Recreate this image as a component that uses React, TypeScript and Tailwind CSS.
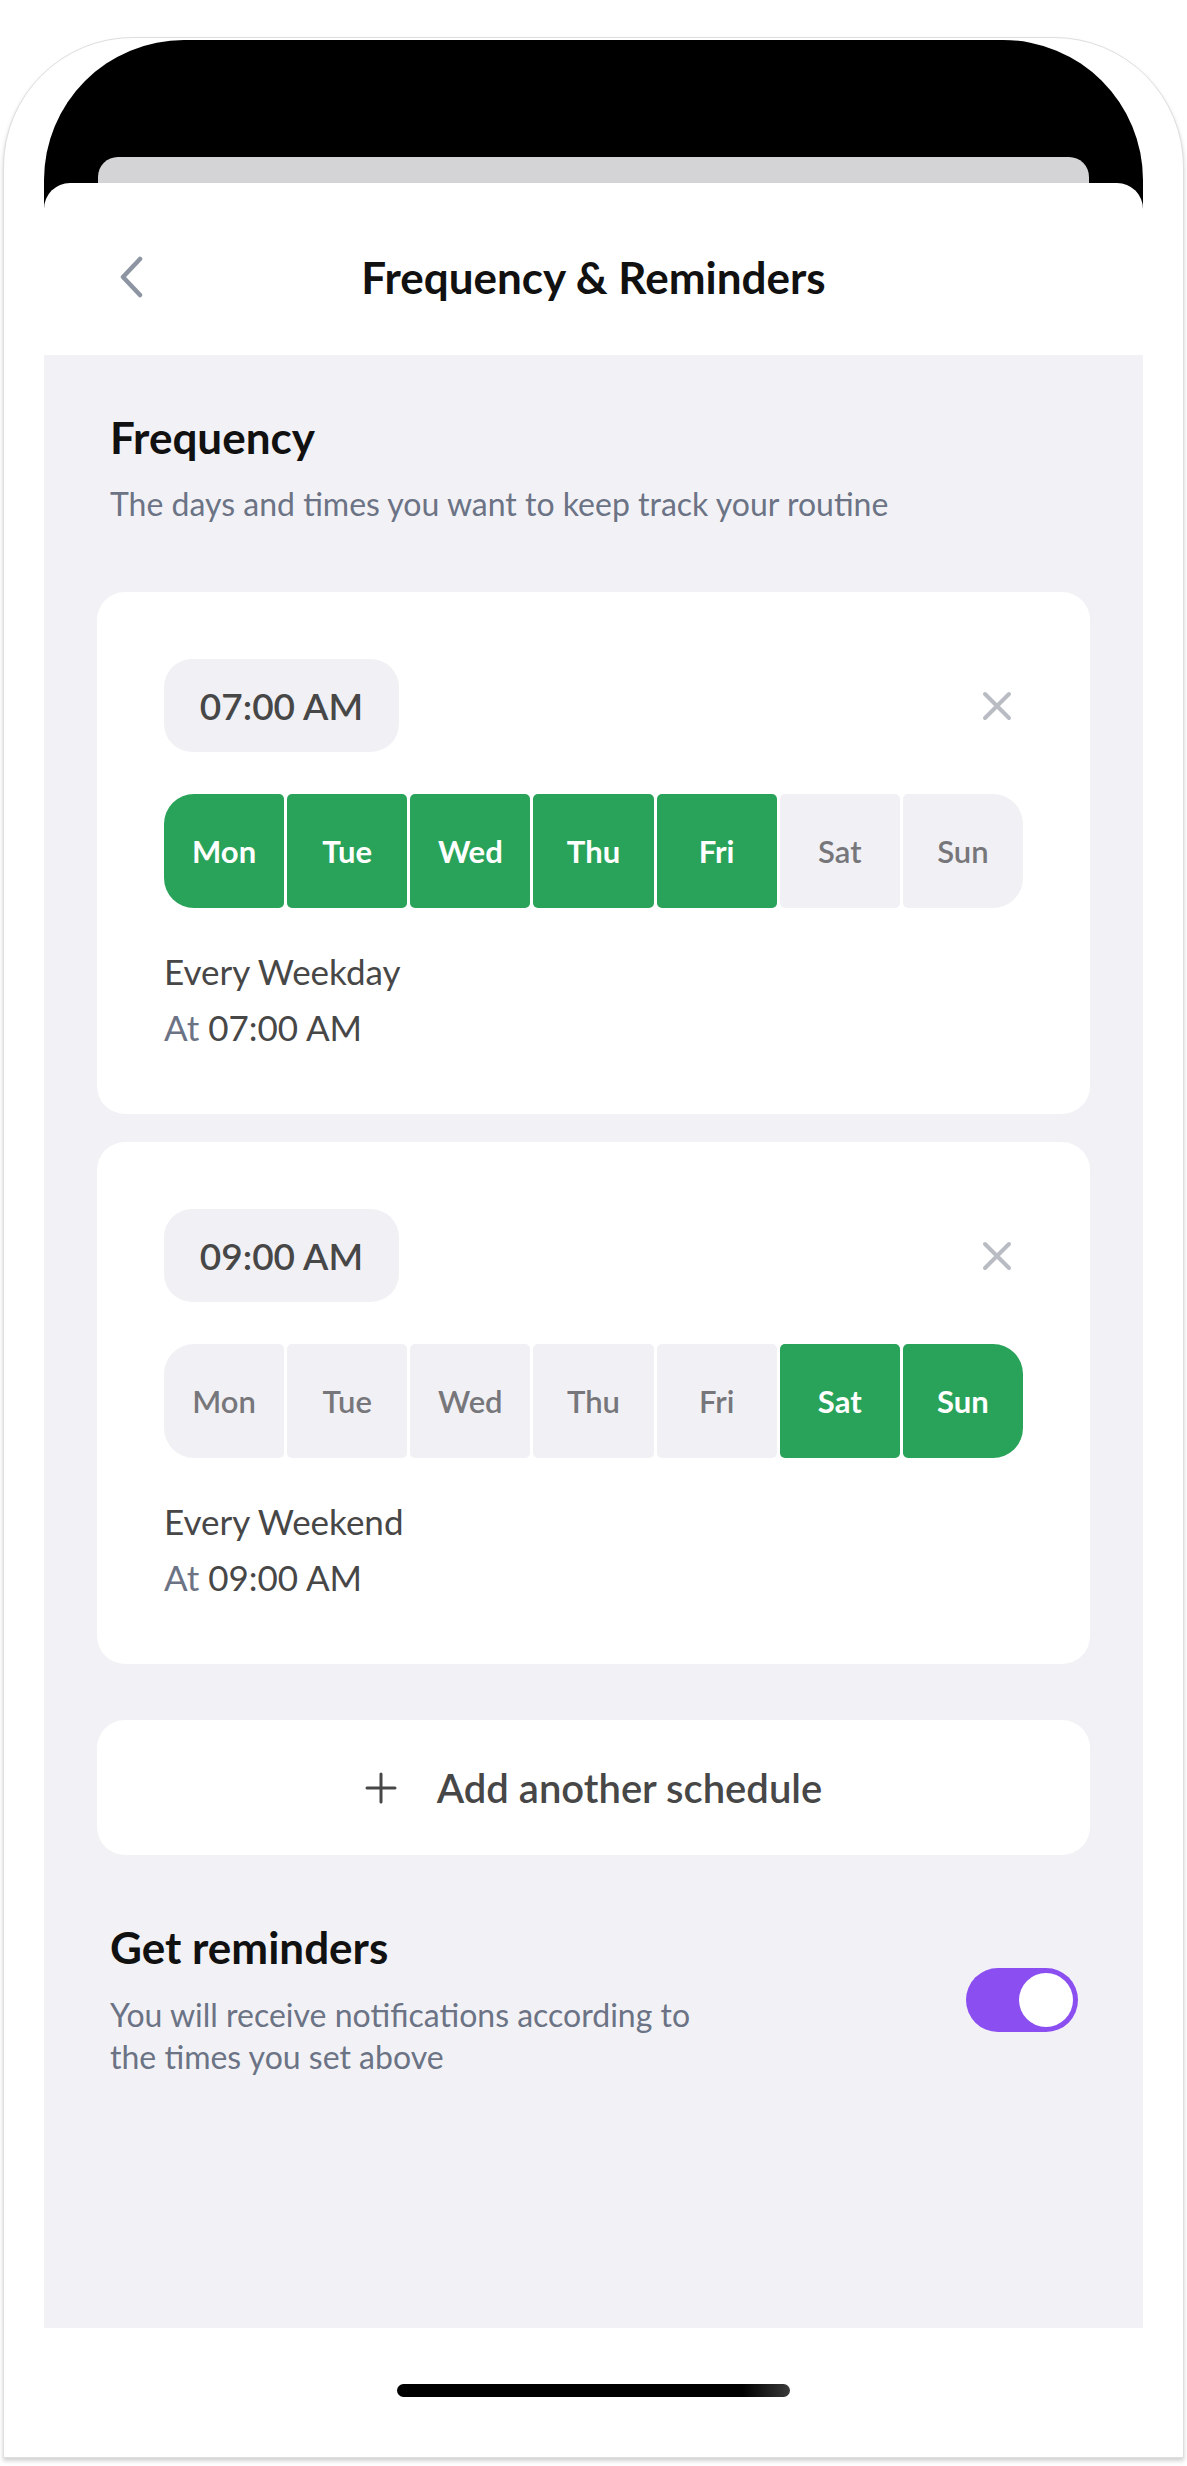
import { useState } from "react";

type Schedule = {
  time: string;
  days: boolean[];
  label: string;
};

const DAYS = ["Mon", "Tue", "Wed", "Thu", "Fri", "Sat", "Sun"];

const SCHEDULES: Schedule[] = [
  { time: "07:00 AM", days: [true, true, true, true, true, false, false], label: "Every Weekday" },
  { time: "09:00 AM", days: [false, false, false, false, false, true, true], label: "Every Weekend" },
];

function ScheduleCard({ s }: { s: Schedule }) {
  return (
    <div className="bg-white rounded-[28px] px-[67px] pt-[67px] pb-[59px]">
      {/* Time + remove */}
      <div className="flex items-center justify-between">
        <div className="w-[235px] h-[93px] rounded-[28px] bg-[#f1f1f5] flex items-center justify-center text-[37px] font-semibold text-[#474747]">
          {s.time}
        </div>
        <button className="w-[52px] h-[52px] flex items-center justify-center">
          <svg width="30" height="30" viewBox="0 0 30 30" fill="none">
            <path d="M3 3 L27 27 M27 3 L3 27" stroke="#b9bcc3" strokeWidth="4" strokeLinecap="round" />
          </svg>
        </button>
      </div>

      {/* Day picker */}
      <div className="flex gap-[3px] mt-[42px] h-[114px]">
        {DAYS.map((d, i) => (
          <div
            key={d}
            className={
              "flex-1 flex items-center justify-center text-[31px] " +
              (s.days[i] ? "bg-[#2aa35a] text-white font-bold " : "bg-[#f1f1f5] text-[#77777b] font-semibold ") +
              (i === 0 ? "rounded-l-[30px] rounded-r-[5px]" : i === 6 ? "rounded-r-[30px] rounded-l-[5px]" : "rounded-[5px]")
            }
          >
            {d}
          </div>
        ))}
      </div>

      <div className="mt-[35px] text-[35px] leading-[56px] text-[#474747]">
        <div>{s.label}</div>
        <div>
          <span className="text-[#6b7385]">At</span> {s.time}
        </div>
      </div>
    </div>
  );
}

export default function App() {
  const [reminders, setReminders] = useState(true);

  return (
    <div className="w-[1187px] h-[2466px] bg-white overflow-hidden" style={{ fontFamily: "Lato, 'Noto Sans', sans-serif" }}>
      {/* Device frame */}
      <div className="mt-[37px] ml-[3px] w-[1181px] h-[2421px] rounded-t-[130px] border border-[#dedede] bg-white shadow-[0_3px_4px_rgba(0,0,0,0.18)] px-[40px] pt-[2px]">
        <div className="h-full rounded-t-[140px] bg-black pt-[117px] flex flex-col">
          <div className="mx-[54px] h-[26px] rounded-t-[20px] bg-[#d4d4d7]" />

          {/* Sheet */}
          <div className="flex-1 rounded-t-[26px] bg-white flex flex-col">
            {/* Header */}
            <div className="h-[172px] pt-[15px] grid grid-cols-[1fr_auto_1fr] items-center">
              <div className="pl-[74px] flex">
                <svg width="26" height="42" viewBox="0 0 26 42" fill="none">
                  <path d="M22 3 L5 21 L22 39" stroke="#8e95a2" strokeWidth="4.5" strokeLinecap="round" strokeLinejoin="round" />
                </svg>
              </div>
              <div className="text-[44px] leading-[52px] font-bold text-[#111]">Frequency &amp; Reminders</div>
              <div />
            </div>

            {/* Content */}
            <div className="h-[1973px] bg-[#f2f2f6] px-[53px] pt-[56px]">
              <div className="pl-[13px]">
                <div className="text-[44px] leading-[52px] font-bold text-[#111]">Frequency</div>
                <div className="mt-[20px] text-[32px] leading-[42px] text-[#6b7385]">
                  The days and times you want to keep track your routine
                </div>
              </div>

              <div className="mt-[67px] flex flex-col gap-[28px]">
                {SCHEDULES.map((s) => (
                  <ScheduleCard key={s.time} s={s} />
                ))}
              </div>

              <button className="mt-[56px] w-full h-[135px] bg-white rounded-[28px] flex items-center justify-center gap-[40px] text-[40px] font-semibold text-[#474747]">
                <svg width="32" height="32" viewBox="0 0 32 32" fill="none">
                  <path d="M16 2 V30 M2 16 H30" stroke="#474747" strokeWidth="3" strokeLinecap="round" />
                </svg>
                Add another schedule
              </button>

              <div className="mt-[66px] pl-[13px] pr-[12px] flex items-center justify-between">
                <div>
                  <div className="text-[44px] leading-[52px] font-bold text-[#111]">Get reminders</div>
                  <div className="mt-[21px] max-w-[620px] text-[32px] leading-[42px] text-[#6b7385]">
                    You will receive notifications according to the times you set above
                  </div>
                </div>
                <button
                  onClick={() => setReminders(!reminders)}
                  className={
                    "w-[112px] h-[64px] rounded-full p-[5px] flex " +
                    (reminders ? "bg-[#8b4ef0] justify-end" : "bg-[#d4d4d7] justify-start")
                  }
                >
                  <span className="w-[54px] h-[54px] rounded-full bg-white block" />
                </button>
              </div>
            </div>

            {/* Home indicator */}
            <div className="flex-1 flex justify-center pt-[56px]">
              <div className="w-[393px] h-[13px] rounded-full bg-[linear-gradient(90deg,#000_88%,#3a3a3a)]" />
            </div>
          </div>
        </div>
      </div>
    </div>
  );
}
